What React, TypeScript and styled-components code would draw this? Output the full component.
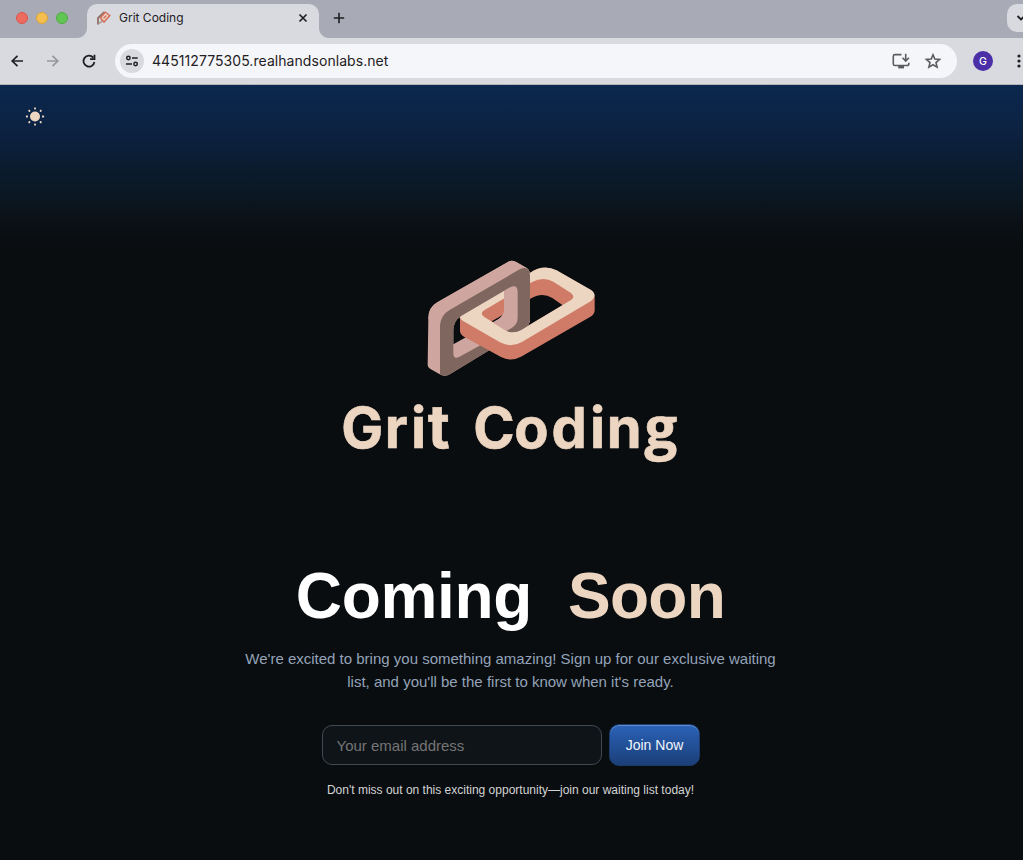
import React from 'react';
import styled, { createGlobalStyle } from 'styled-components';

const GlobalStyle = createGlobalStyle`
  * { box-sizing: border-box; }
  body { margin: 0; background: #090d10; overflow: hidden; }
`;

const Window = styled.div`
  display: flex;
  flex-direction: column;
  width: 1023px;
  height: 860px;
  overflow: hidden;
  font-family: 'Liberation Sans', Arial, sans-serif;
`;

const TabStrip = styled.div`
  display: flex;
  height: 38px;
  background: #a8aab6;
  padding-left: 16px;
`;

const Lights = styled.div`
  display: flex;
  gap: 8px;
  width: 71px;
  padding-top: 12px;
`;

const Light = styled.span<{ $fill: string; $edge: string }>`
  width: 12px;
  height: 12px;
  border-radius: 50%;
  background: ${(p) => p.$fill};
  border: 1px solid ${(p) => p.$edge};
`;

const Tab = styled.div`
  position: relative;
  display: flex;
  align-items: center;
  width: 232px;
  height: 34px;
  margin-top: 4px;
  padding: 0 10px 6px 9px;
  border-radius: 10px 10px 0 0;
  background: #d9dae0;
  font: 12px Inter, sans-serif;
  color: #1f2023;

  &::before, &::after {
    content: '';
    position: absolute;
    bottom: 0;
    width: 10px;
    height: 10px;
  }
  &::before {
    left: -10px;
    background: radial-gradient(circle at 0 0, transparent 9.5px, #d9dae0 10.5px);
  }
  &::after {
    right: -10px;
    background: radial-gradient(circle at 100% 0, transparent 9.5px, #d9dae0 10.5px);
  }
`;

const TabTitle = styled.span`
  flex: 1;
  margin-left: 7px;
  padding-bottom: 2px;
  letter-spacing: 0;
`;

const NewTab = styled.div`
  margin: 11px 0 0 13px;
  height: 14px;
  display: flex;
`;

const TabSearch = styled.div`
  display: flex;
  margin: 4px 0 0 auto;
  width: 16px;
  height: 28px;
  padding: 10px 0 0 9px;
  overflow: hidden;
  border-radius: 10px 0 0 10px;
  background: #d9dae0;
`;

const Chevron = styled.svg`
  flex: none;
  width: 12px;
  height: 8px;
`;

const Toolbar = styled.div`
  display: flex;
  align-items: center;
  height: 47px;
  padding-left: 9px;
  background: #d9dae0;
  border-bottom: 1px solid #b3b5b9;
`;

const NavButton = styled.span`
  display: flex;
  width: 16px;
  height: 16px;
  margin-right: 20px;
`;

const AddressBar = styled.div`
  display: flex;
  align-items: center;
  width: 842px;
  height: 34px;
  margin-left: -2px;
  padding: 0 15px 0 5px;
  border-radius: 17px;
  background: #f5f6f9;
`;

const SiteInfo = styled.span`
  display: flex;
  align-items: center;
  justify-content: center;
  width: 24px;
  height: 24px;
  border-radius: 50%;
  background: #d9dae0;
`;

const Url = styled.span`
  flex: 1;
  margin-left: 8px;
  padding-bottom: 2px;
  font: 14px Inter, sans-serif;
  letter-spacing: 0.06px;
  color: #1f2023;
`;

const BarIcons = styled.span`
  display: flex;
  gap: 13px;
`;

const Avatar = styled.span`
  display: flex;
  align-items: center;
  justify-content: center;
  width: 20px;
  height: 20px;
  margin: 0 24px 0 16px;
  border-radius: 50%;
  background: #4b2fa6;
  color: #fff;
  font: 500 10.5px Inter, sans-serif;
`;

const Page = styled.main`
  display: flex;
  flex-direction: column;
  align-items: center;
  flex: 1;
  padding-right: 1px;
  background: linear-gradient(180deg, #0b284e 0, #0c2140 50px, #0b1c30 80px, #0b1721 112px, #0b1117 134px, #090d10 160px);
`;

const ThemeToggle = styled.div`
  align-self: flex-start;
  height: 20px;
  margin: 22px 0 0 25px;
`;

const LogoMark = styled.svg`
  display: block;
  width: 190px;
  height: 135px;
  margin: 123px 2px 0 0;
`;

const Wordmark = styled.svg`
  display: block;
  width: 360px;
  height: 80px;
  margin: 5px 2px 0 0;
  overflow: visible;
`;

const Title = styled.h1`
  display: flex;
  gap: 36px;
  margin: 89px 1px 0 0;
  font-size: 64px;
  line-height: 74px;
  font-weight: 700;
  letter-spacing: -0.35px;
  color: #fff;
`;

const Accent = styled.span`
  color: #edd6c1;
  letter-spacing: -0.7px;
`;

const Intro = styled.p`
  width: 560px;
  margin: 14px 1px 0 0;
  text-align: center;
  font-size: 15px;
  line-height: 23px;
  color: #94a3b8;
`;

const Form = styled.div`
  display: flex;
  gap: 7px;
  margin: 31px 1px 0 0;
`;

const EmailInput = styled.input`
  width: 280px;
  height: 40px;
  margin-top: 1px;
  padding: 1px 14px 0;
  border: 1px solid #434953;
  border-radius: 10px;
  background: #0f1418;
  font: 15px 'Liberation Sans', Arial, sans-serif;
  color: #fff;
  &::placeholder { color: #757575; opacity: 1; }
`;

const JoinButton = styled.button`
  width: 91px;
  height: 42px;
  padding: 0 0 1px 1px;
  border: 1px solid #1c3b6d;
  border-radius: 10px;
  background: linear-gradient(180deg, #2b62b8, #1b3f78);
  box-shadow: inset 0 1px 0 #5f8dcf;
  font: 14px 'Liberation Sans', Arial, sans-serif;
  color: #f1f5fb;
`;

const Note = styled.p`
  margin: 16px 1px 0 0;
  font-size: 12px;
  line-height: 16px;
  color: #d4d4d4;
`;

const MAUVE_RING =
  'M38 345 L40 205 Q40 172 67 157 L280 35 Q293 29 305 37 L335 54 Q345 60 345 78 L345 207 Q345 225 325 238 L102 374 Q88 380 77 374 L45 356 Q38 351 38 345 Z';
const MAUVE_FACE =
  'M75 373 L75 225 Q77 195 105 179 L314 58 Q345 45 345 78 L345 207 Q345 227 325 239 L102 374 Q86 381 75 373 Z';
const RING_HOLE =
  'M115 310 L115 240 Q116 212 138 198 L285 112 Q308 101 308 126 L308 202 Q308 224 290 234 L132 321 Q115 329 115 310 Z';
const RING_OPENING =
  'M115 283 L115 240 Q116 212 138 198 L267 123 L267 178 Q267 198 250 208 Z';

const UprightRing = () => (
  <g>
    <path d={`${MAUVE_RING} ${RING_OPENING}`} fillRule="evenodd" fill="#cfa69f" />
    <path d={`${MAUVE_FACE} ${RING_HOLE}`} fillRule="evenodd" fill="#7f675f" />
  </g>
);

const FlatRing = () => (
  <g fillRule="evenodd">
    <path
      fill="#cf7b67"
      d="M135 200 L345 68 Q385 42 425 62 L527 120 Q539 127 539 140 L539 182 Q538 193 525 201 L318 320 Q288 336 258 321 L147 260 Q135 253 135 243 Z M230 214 L267 193 L345 147 Q380 125 412 144 L443 166 L318 240 Q293 254 270 240 Z"
    />
    <path
      fill="#edd6c1"
      d="M140 195 L345 69 Q385 41 425 61 L527 119 Q550 135 527 154 L322 275 Q288 295 255 277 L143 212 Q129 202 140 195 Z M207 200 Q192 189 210 179 L350 97 Q385 78 415 95 L468 129 Q482 141 468 150 L318 240 Q293 254 270 240 Z"
    />
  </g>
);

const Rings = () => (
  <>
    <UprightRing />
    <FlatRing />
    <g clipPath="url(#front)">
      <UprightRing />
    </g>
  </>
);

export default function App() {
  return (
    <Window>
      <GlobalStyle />
      <TabStrip>
        <Lights>
          <Light $fill="#ed6b5f" $edge="#d9574b" />
          <Light $fill="#f4bf4f" $edge="#dba53a" />
          <Light $fill="#61c554" $edge="#4fae3f" />
        </Lights>
        <Tab>
          <svg width="16" height="16" viewBox="0 0 16 16" fill="none">
            <path d="M2 14.5 L2 8 L8.5 1.8" stroke="#8f6f68" strokeWidth="1.8" />
            <path d="M2 14 L6 11.5 V8" stroke="#a58a84" strokeWidth="1.3" />
            <path d="M4.5 8 L9.3 2.2 L13.8 5.6 L8 12 Z" fill="#eddccf" stroke="#d4705a" strokeWidth="1.5" />
            <path d="M7.5 8.6 L10.3 5.6" stroke="#d4705a" strokeWidth="1.5" />
          </svg>
          <TabTitle>Grit Coding</TabTitle>
          <svg width="12" height="12" viewBox="0 0 12 12" stroke="#1f2023" strokeWidth="1.7">
            <path d="M2.5 2.5 L9.5 9.5 M9.5 2.5 L2.5 9.5" />
          </svg>
        </Tab>
        <NewTab>
          <svg width="14" height="14" viewBox="0 0 14 14" stroke="#1f2023" strokeWidth="1.6">
            <path d="M7 1.8 V12.2 M1.8 7 H12.2" />
          </svg>
        </NewTab>
        <TabSearch>
          <Chevron viewBox="0 0 12 8" fill="none" stroke="#1f2023" strokeWidth="1.8">
            <path d="M1.5 2 L5 5.5 L8.5 2" />
          </Chevron>
        </TabSearch>
      </TabStrip>
      <Toolbar>
        <NavButton>
          <svg width="16" height="16" viewBox="0 0 16 16" fill="none" stroke="#1f2023" strokeWidth="1.7">
            <path d="M14 8 H3.5 M8.5 2.8 L3.2 8 L8.5 13.2" />
          </svg>
        </NavButton>
        <NavButton>
          <svg width="16" height="16" viewBox="0 0 16 16" fill="none" stroke="#96979c" strokeWidth="1.7">
            <path d="M2 8 H12.5 M7.5 2.8 L12.8 8 L7.5 13.2" />
          </svg>
        </NavButton>
        <NavButton>
          <svg width="16" height="16" viewBox="0 0 16 16" fill="none" stroke="#1f2023" strokeWidth="1.8">
            <path d="M13.4 9 A5.5 5.5 0 1 1 12.2 4.6 M13.5 1.7 V6.2 H9" />
          </svg>
        </NavButton>
        <AddressBar>
          <SiteInfo>
            <svg width="14" height="14" viewBox="0 0 14 14" fill="none" stroke="#1f2023" strokeWidth="1.5">
              <circle cx="3.4" cy="4" r="1.7" />
              <path d="M7 4 H12.7 M1 10 H7" />
              <circle cx="10.6" cy="10" r="1.7" />
            </svg>
          </SiteInfo>
          <Url>445112775305.realhandsonlabs.net</Url>
          <BarIcons>
            <svg width="20" height="18" viewBox="0 0 20 18" fill="none" stroke="#5b5c60" strokeWidth="1.6">
              <path d="M10.5 2.6 H4 Q2.3 2.6 2.3 4.2 V11.9 Q2.3 13.5 4 13.5 H16 Q17.8 13.5 17.8 11.9 V10.8 M14.7 1.8 V8.3 M11.5 5.8 L14.7 9 L17.9 5.8" />
              <path d="M7.2 15.2 H13" strokeWidth="2.4" />
            </svg>
            <svg width="18" height="18" viewBox="0 0 18 18" fill="none" stroke="#5b5c60" strokeWidth="1.6">
              <path d="M9 2.8 L10.8 7 L15.6 7.4 L12 10.6 L13.1 15.2 L9 12.8 L4.9 15.2 L6 10.6 L2.4 7.4 L7.2 7 Z" />
            </svg>
          </BarIcons>
        </AddressBar>
        <Avatar>G</Avatar>
        <svg width="6" height="18" viewBox="0 0 6 18" fill="#1f2023">
          <circle cx="2" cy="4" r="1.6" />
          <circle cx="2" cy="9" r="1.6" />
          <circle cx="2" cy="14" r="1.6" />
        </svg>
      </Toolbar>
      <Page>
        <ThemeToggle>
          <svg width="20" height="20" viewBox="0 0 20 20" fill="#edd6c1">
            <circle cx="10" cy="9.5" r="5" />
            {[0, 45, 90, 135, 180, 225, 270, 315].map((a) => (
              <rect key={a} x="9.1" y="0.4" width="1.8" height="2.1" rx="0.4" transform={`rotate(${a} 10 9.5)`} />
            ))}
          </svg>
        </ThemeToggle>
        <LogoMark viewBox="0 0 570 405">
          <clipPath id="front">
            <path d="M0 0 H360 V215 L318 240 Q293 254 270 240 L207 200 L126 207 L0 207 Z" />
          </clipPath>
          <Rings />
        </LogoMark>
        <Wordmark viewBox="0 0 360 80">
          <text
            y="57.7"
            x="11.3 54.8 81 97.8 121 143.3 184.3 221.5 260 276.8 314.5"
            fill="#edd6c1"
            stroke="#edd6c1"
            strokeWidth="0.6"
            fontFamily="Inter, sans-serif"
            fontWeight="700"
            fontSize="56"
          >
            Gri
            <tspan fontSize="60">t</tspan>
            {' Codin'}
            <tspan fontFamily="Open Sans, sans-serif" fontSize="58">g</tspan>
          </text>
        </Wordmark>
        <Title>
          <span>Coming</span>
          <Accent>Soon</Accent>
        </Title>
        <Intro>
          We're excited to bring you something amazing! Sign up for our exclusive waiting
          <br />
          list, and you'll be the first to know when it's ready.
        </Intro>
        <Form>
          <EmailInput placeholder="Your email address" />
          <JoinButton>Join Now</JoinButton>
        </Form>
        <Note>Don't miss out on this exciting opportunity—join our waiting list today!</Note>
      </Page>
    </Window>
  );
}
